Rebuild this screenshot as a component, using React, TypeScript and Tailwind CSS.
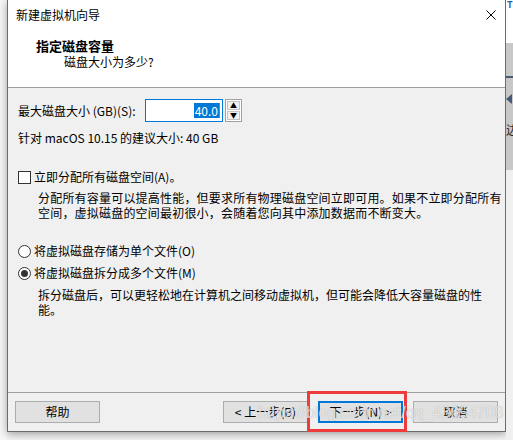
import { useState } from "react";

const font = "font-['Noto_Sans_CJK_SC','Noto_Sans',sans-serif]";

function WinButton({ label, primary }: { label: string; primary?: boolean }) {
  return (
    <button
      type="button"
      className={`flex h-[22px] w-[85px] items-center justify-center bg-[#e1e1e1] text-[12px] leading-none text-black ${
        primary ? "border-2 border-[#0078d7]" : "border border-[#adadad]"
      }`}
    >
      {label}
    </button>
  );
}

function Radio({ checked, label }: { checked?: boolean; label: string }) {
  return (
    <div className="flex h-[16px] items-center gap-[3px]">
      <span className="flex h-[13px] w-[13px] items-center justify-center rounded-full border border-[#333] bg-white">
        {checked && <span className="h-[7px] w-[7px] rounded-full bg-[#333]" />}
      </span>
      <span className="text-[12px] leading-[16px]">{label}</span>
    </div>
  );
}

export default function App() {
  const [split] = useState(true);

  return (
    <div className={`relative flex h-[440px] w-[513px] overflow-hidden bg-[#f3f3f3] text-black ${font}`}>
      <div className="w-[7px] bg-[#f6f6f6]" />

      {/* dialog window */}
      <div className="flex h-[432px] w-[499px] flex-col border-x border-b border-[#6b6b6b] bg-[#f0f0f0] shadow-[0_2px_8px_rgba(0,0,0,0.35)]">
        <div className="flex h-[30px] items-center justify-between bg-white pl-[8px] pr-[9px]">
          <span className="text-[12px] leading-none">新建虚拟机向导</span>
          <svg width="10" height="10" viewBox="0 0 10 10" className="text-black">
            <path d="M0.5 0.5 L9.5 9.5 M9.5 0.5 L0.5 9.5" stroke="currentColor" strokeWidth="1" />
          </svg>
        </div>

        <div className="h-[58px] border-b border-[#a0a0a0] bg-white pt-[8px]">
          <div className="pl-[28px] text-[13px] font-bold leading-[16px]">指定磁盘容量</div>
          <div className="pl-[56px] text-[12px] leading-[16px]">磁盘大小为多少?</div>
        </div>

        <div className="flex-1 pl-[10px] pt-[11px] text-[12px]">
          <div className="flex h-[23px] items-center">
            <span className="w-[127px] leading-[16px]">最大磁盘大小 (GB)(S):</span>
            <div className="flex h-[23px] w-[78px] items-center justify-end border border-[#0078d7] bg-white pr-[2px]">
              <span className="bg-[#0078d7] px-[1px] text-[12px] leading-[15px] text-white">40.0</span>
              <span className="h-[15px] w-[1px] bg-[#e06a00]" />
            </div>
            <div className="ml-[2px] flex h-[23px] w-[17px] flex-col gap-[1px] border border-[#a0a0a0] bg-white p-[1px]">
              <span className="flex flex-1 items-center justify-center border border-[#c4c4c4] bg-[#f0f0f0] text-[7px] leading-none">▲</span>
              <span className="flex flex-1 items-center justify-center border border-[#c4c4c4] bg-[#f0f0f0] text-[7px] leading-none">▼</span>
            </div>
          </div>

          <div className="mt-[8px] leading-[16px]">针对 macOS 10.15 的建议大小: 40 GB</div>

          <div className="mt-[23px] flex h-[16px] items-center gap-[3px]">
            <span className="h-[13px] w-[13px] border border-[#333] bg-white" />
            <span className="leading-[16px]">立即分配所有磁盘空间(A)。</span>
          </div>
          <p className="ml-[20px] mt-[5px] whitespace-nowrap text-[12px] leading-[15px] tracking-[0.2px]">
            分配所有容量可以提高性能，但要求所有物理磁盘空间立即可用。如果不立即分配所有
            <br />
            空间，虚拟磁盘的空间最初很小，会随着您向其中添加数据而不断变大。
          </p>

          <div className="mt-[23px]">
            <Radio checked={!split} label="将虚拟磁盘存储为单个文件(O)" />
          </div>
          <div className="mt-[6px]">
            <Radio checked={split} label="将虚拟磁盘拆分成多个文件(M)" />
          </div>
          <p className="ml-[20px] mt-[6px] whitespace-nowrap text-[12px] leading-[15px]">
            拆分磁盘后，可以更轻松地在计算机之间移动虚拟机，但可能会降低大容量磁盘的性
            <br />
            能。
          </p>
        </div>

        <div className="flex h-[39px] items-start border-t border-[#a0a0a0] px-[7px] pt-[8px]">
          <WinButton label="帮助" />
          <div className="ml-auto flex gap-[10px]">
            <WinButton label="< 上一步(B)" />
            <WinButton label="下一步(N) >" primary />
            <WinButton label="取消" />
          </div>
        </div>
      </div>

      {/* background window peeking out on the right */}
      <div className="flex w-[7px] flex-col">
        <div className="h-[43px] bg-white">
          <span className="block pl-[1px] text-[9px] font-bold leading-[10px] text-[#1a5fb4]">T</span>
        </div>
        <div className="flex h-[127px] flex-col items-start bg-[#c8c8c8]">
          <span className="mt-[33px] h-[2px] w-[7px] bg-[#4b5b70]" />
          <span className="mt-[16px] h-0 w-0 border-y-[5px] border-r-[6px] border-y-transparent border-r-[#465a78]" />
          <span className="mt-[20px] text-[12px] leading-none text-[#222]">边</span>
        </div>
        <div className="flex-1 bg-[#f0f0f0]" />
      </div>

      {/* annotation + watermark overlays */}
      <div className="pointer-events-none absolute left-[307px] top-[391px] h-[41px] w-[100px] border-[3px] border-[#ee3b3b]" />
      <div className="pointer-events-none absolute left-[258px] top-[403px] font-['Liberation_Sans',Arial,sans-serif] text-[16px] leading-[20px] text-white/70 [text-shadow:0_0_1px_rgba(120,120,120,0.6)]">
        https://blog.csdn.net/qq_43654708
      </div>
    </div>
  );
}
